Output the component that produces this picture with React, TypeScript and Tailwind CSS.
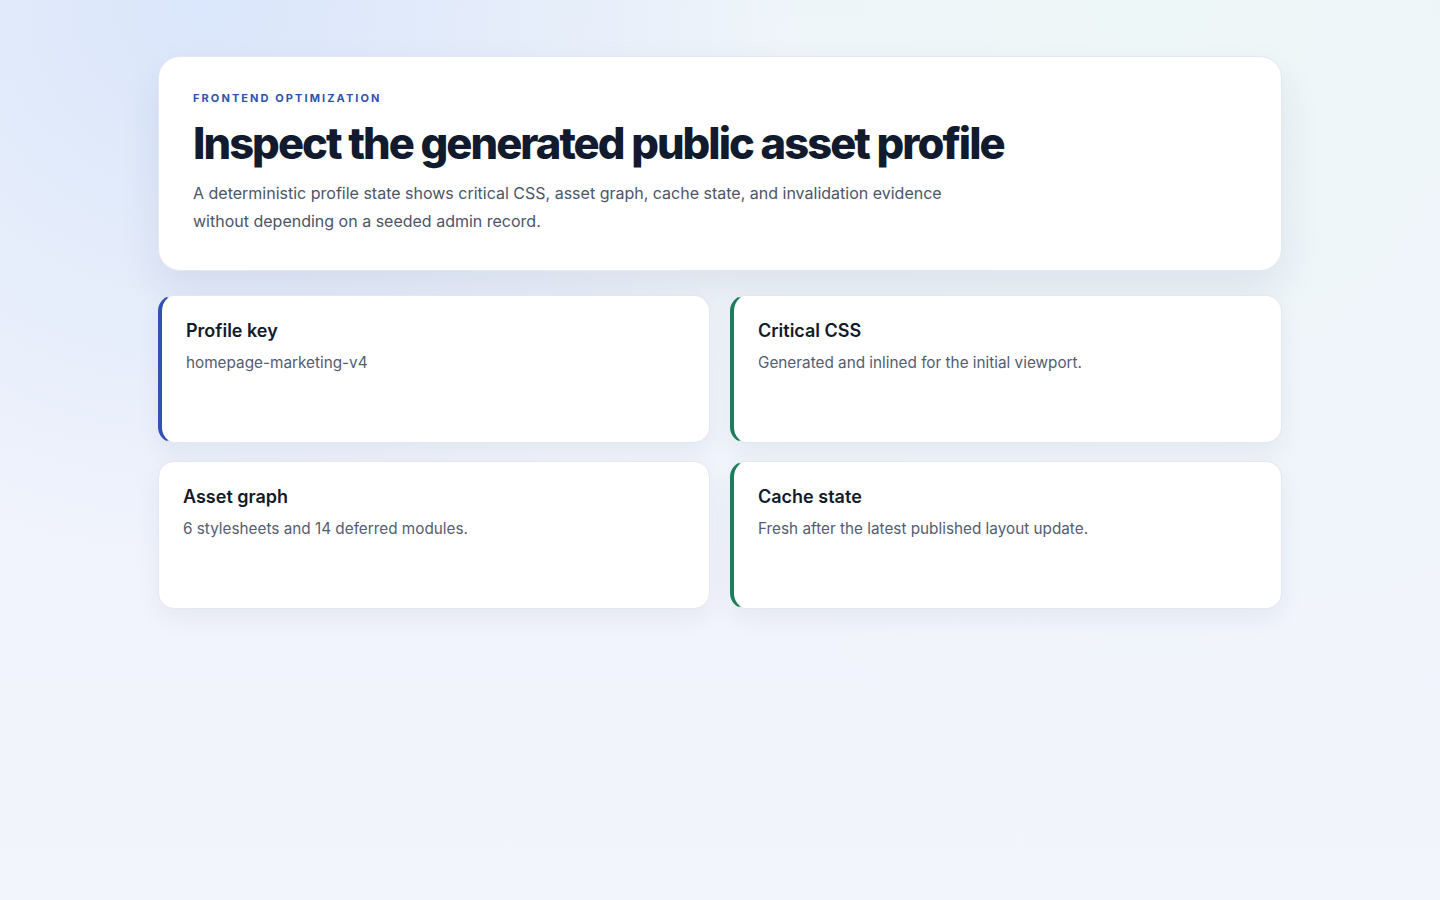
const cards = [
  { title: "Profile key", body: "homepage-marketing-v4", accent: "border-l-4 border-l-[#3451b2]" },
  { title: "Critical CSS", body: "Generated and inlined for the initial viewport.", accent: "border-l-4 border-l-[#1b7d5b]" },
  { title: "Asset graph", body: "6 stylesheets and 14 deferred modules.", accent: "" },
  { title: "Cache state", body: "Fresh after the latest published layout update.", accent: "border-l-4 border-l-[#1b7d5b]" },
];

export default function App() {
  return (
    <div className="min-h-screen bg-[radial-gradient(circle_at_14%_0%,#dae6fb_0%,rgba(218,230,251,0)_38%),radial-gradient(circle_at_80%_0%,#eef7f8_0%,rgba(238,247,248,0)_50%),linear-gradient(180deg,#eef2fa_0%,#f3f5fd_100%)] font-['Inter',sans-serif]">
      <main className="mx-auto w-[1124px] pt-[56px] pb-10">
        {/* Page header */}
        <section className="rounded-[22px] border border-[#e3e8f1] bg-white px-[34px] pt-[33px] pb-[35px] shadow-[0_18px_40px_rgba(30,45,90,0.09)]">
          <p className="text-[11px] font-bold uppercase tracking-[0.19em] text-[#2f53b0]">Frontend optimization</p>
          <h1 className="mt-[10px] text-[43.5px] font-extrabold leading-[52px] tracking-[-0.045em] text-[#121a2d]">
            Inspect the generated public asset profile
          </h1>
          <p className="mt-[10px] max-w-[780px] text-[16px] leading-[28px] text-[#4b5568]">
            A deterministic profile state shows critical CSS, asset graph, cache state, and invalidation evidence without depending on a seeded admin record.
          </p>
        </section>

        {/* Profile facts */}
        <div className="mt-[24px] grid grid-cols-2 gap-x-[20px] gap-y-[18px]">
          {cards.map(card => (
            <div
              key={card.title}
              className={`min-h-[148px] rounded-[16px] border border-[#e3e7ef] bg-white px-6 pt-[21px] shadow-[0_10px_24px_rgba(30,45,90,0.06)] ${card.accent}`}
            >
              <h2 className="text-[18px] font-semibold leading-[28px] text-[#131a2b]">{card.title}</h2>
              <p className="mt-[6px] text-[15.3px] leading-[24px] text-[#535d70]">{card.body}</p>
            </div>
          ))}
        </div>
      </main>
    </div>
  );
}
